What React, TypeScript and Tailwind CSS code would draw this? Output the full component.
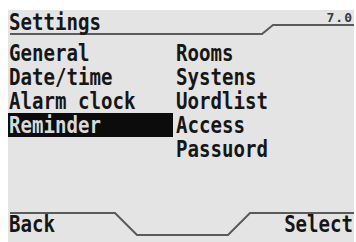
import React from "react";

const font = { fontFamily: '"DejaVu Sans Mono", monospace' };

function T({ children, right = false, light = false }: { children: React.ReactNode; right?: boolean; light?: boolean }) {
  return (
    <span
      className={`inline-block font-bold scale-x-[0.83] ${right ? "origin-right" : "origin-left"} ${light ? "text-[#d9d9d9]" : "text-[#161616]"}`}
    >
      {children}
    </span>
  );
}

export default function App() {
  const left = ["General", "Date/time", "Alarm clock", "Reminder", ""];
  const right = ["Rooms", "Systens", "Uordlist", "Access", "Passuord"];
  return (
    <div className="w-[356px] h-[242px] bg-white pt-[10px] pl-[8px] pr-[2px] overflow-hidden" style={font}>
      <div className="relative h-full bg-[#e4e4e4] flex flex-col text-[23px]">
        <svg className="absolute inset-0 pointer-events-none" width="346" height="232" viewBox="0 0 346 232">
          <polyline points="2,24 254,24 265,15 346,15" fill="none" stroke="#5a5a5a" strokeWidth="2" />
          <polyline points="2,203 107,203 129,225 220,225 242,203 346,203" fill="none" stroke="#5a5a5a" strokeWidth="2" />
        </svg>
        <div className="h-[31px] flex items-start justify-between pl-[1px] pr-[1px]">
          <div className="leading-[22px] pt-[1px]">
            <T>Settings</T>
          </div>
          <div className="text-[13px] leading-[13px] pt-[1px] font-bold text-[#3a3a3a] tracking-[1px]">7.0</div>
        </div>
        <div className="grid grid-cols-[168px_1fr] leading-[24px]">
          {left.map((l, i) => (
            <React.Fragment key={i}>
              <div className={`h-[24px] w-[165px] pl-[1px] ${l === "Reminder" ? "bg-[#0c0c0c]" : ""}`}>
                {l && <T light={l === "Reminder"}>{l}</T>}
              </div>
              <div className="h-[24px]">
                <T>{right[i]}</T>
              </div>
            </React.Fragment>
          ))}
        </div>
        <div className="flex-1" />
        <div className="h-[24px] leading-[24px] flex justify-between pl-[1px] pr-[1px] mb-[6px]">
          <T>Back</T>
          <T right>Select</T>
        </div>
      </div>
    </div>
  );
}
